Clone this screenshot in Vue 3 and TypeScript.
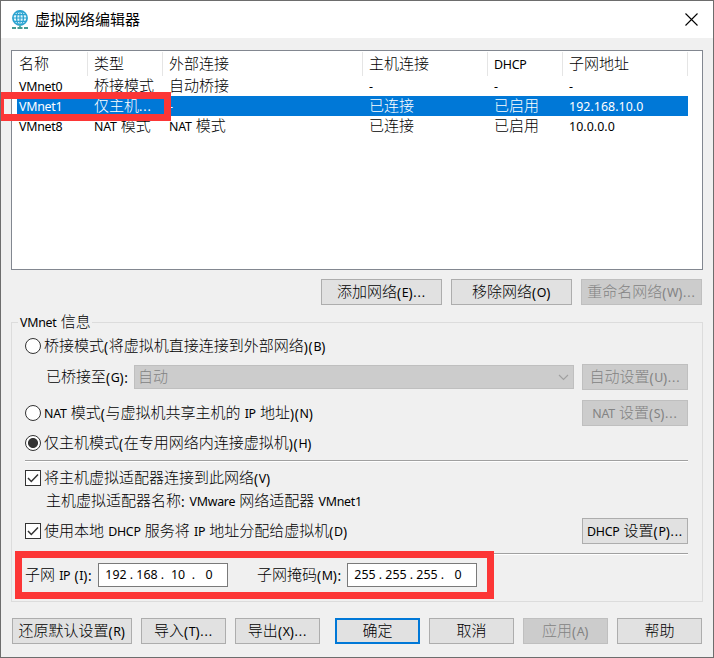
<script setup lang="ts">
import { h, ref, type FunctionalComponent } from 'vue'

interface Network {
  name: string
  type: string
  external: string
  host: string
  dhcp: string
  subnet: string
}

// Ideographs, words, numbers and punctuation have their own metrics,
// so a label is split into runs.
const runPattern = /[\u4e00-\u9fff]+|[():]+|\.{3}| +|[A-Za-z]+\d*|[\d.]+|-/g

function runClass(run: string): string {
  if (/[\u4e00-\u9fff]/.test(run)) return 'han'
  if (/[():]/.test(run)) return 'lat paren'
  if (run === '...') return 'lat dots'
  if (run.startsWith(' ')) return 'lat gap'
  if (/^\d/.test(run)) return 'lat num'
  return 'lat'
}

const Txt: FunctionalComponent<{ t: string }> = (props) =>
  h(
    'span',
    { class: 'txt' },
    (props.t.match(runPattern) ?? []).map((run) => h('span', { class: runClass(run) }, run)),
  )
Txt.props = ['t']

const columns = ['名称', '类型', '外部连接', '主机连接', 'DHCP', '子网地址']
const networks: Network[] = [
  { name: 'VMnet0', type: '桥接模式', external: '自动桥接', host: '-', dhcp: '-', subnet: '-' },
  { name: 'VMnet1', type: '仅主机...', external: '-', host: '已连接', dhcp: '已启用', subnet: '192.168.10.0' },
  { name: 'VMnet8', type: 'NAT 模式', external: 'NAT 模式', host: '已连接', dhcp: '已启用', subnet: '10.0.0.0' },
]
const selected = ref('VMnet1')
const mode = ref('host')
const connectAdapter = ref(true)
const useDhcp = ref(true)
const ip = ['192', '168', '10', '0']
const mask = ['255', '255', '255', '0']
</script>

<template>
  <div class="window">
    <header class="title">
      <svg class="globe" width="18" height="20" viewBox="0 0 18 20">
        <circle cx="9" cy="8" r="7.1" fill="#e2f5fc" stroke="#2ba3d0" stroke-width="1.7" />
        <ellipse cx="9" cy="8" rx="3.4" ry="7" fill="none" stroke="#2ba3d0" stroke-width="1.3" />
        <path d="M9 1v14M2 8h14M3 4.6h12M3 11.4h12" fill="none" stroke="#2ba3d0" stroke-width="1.2" />
        <path d="M9 15v3" stroke="#55b7ae" stroke-width="2" />
        <path d="M1 18h4M6.5 18h5M13 18h4" stroke="#459b91" stroke-width="2" />
      </svg>
      <h1>虚拟网络编辑器</h1>
      <svg class="close" width="13" height="13" viewBox="0 0 13 13">
        <path d="M.5 .5l12 12M12.5 .5l-12 12" stroke="#000" stroke-width="1.1" />
      </svg>
    </header>

    <main class="body">
      <section class="list">
        <div class="row head">
          <div v-for="c in columns" :key="c" class="cell"><Txt :t="c" /></div>
        </div>
        <div
          v-for="n in networks"
          :key="n.name"
          class="row item"
          :class="{ selected: n.name === selected }"
          @click="selected = n.name"
        >
          <div class="cell"><Txt :t="n.name" /></div>
          <div class="cell"><Txt :t="n.type" /></div>
          <div class="cell"><Txt :t="n.external" /></div>
          <div class="cell"><Txt :t="n.host" /></div>
          <div class="cell"><Txt :t="n.dhcp" /></div>
          <div class="cell"><Txt :t="n.subnet" /></div>
        </div>
      </section>

      <div class="actions">
        <button><Txt t="添加网络(E)..." /></button>
        <button><Txt t="移除网络(O)" /></button>
        <button disabled><Txt t="重命名网络(W)..." /></button>
      </div>

      <section class="group">
        <div class="legend"><Txt t="VMnet 信息" /></div>
        <div class="line bridge" @click="mode = 'bridge'">
          <i class="radio" :class="{ on: mode === 'bridge' }"></i>
          <Txt t="桥接模式(将虚拟机直接连接到外部网络)(B)" />
        </div>
        <div class="line bridged-to">
          <Txt class="to-label" t="已桥接至(G):" />
          <div class="combo">
            <Txt t="自动" />
            <svg width="11" height="7" viewBox="0 0 11 7">
              <path d="M1 1l4.5 4.5L10 1" fill="none" stroke="#a0a0a0" stroke-width="1.1" />
            </svg>
          </div>
          <button disabled><Txt t="自动设置(U)..." /></button>
        </div>
        <div class="line nat" @click="mode = 'nat'">
          <i class="radio" :class="{ on: mode === 'nat' }"></i>
          <Txt t="NAT 模式(与虚拟机共享主机的 IP 地址)(N)" />
          <button disabled><Txt t="NAT 设置(S)..." /></button>
        </div>
        <div class="line host" @click="mode = 'host'">
          <i class="radio" :class="{ on: mode === 'host' }"></i>
          <Txt t="仅主机模式(在专用网络内连接虚拟机)(H)" />
        </div>
        <div class="rule"></div>
        <div class="line adapter" @click="connectAdapter = !connectAdapter">
          <i class="check">
            <svg v-if="connectAdapter" width="14" height="14" viewBox="0 0 14 14">
              <path d="M2 7l3.3 3.4L12 3.5" fill="none" stroke="#333" stroke-width="1.5" />
            </svg>
          </i>
          <Txt t="将主机虚拟适配器连接到此网络(V)" />
        </div>
        <div class="line adapter-name">
          <Txt t="主机虚拟适配器名称: VMware 网络适配器 VMnet1" />
        </div>
        <div class="line dhcp">
          <i class="check" @click="useDhcp = !useDhcp">
            <svg v-if="useDhcp" width="14" height="14" viewBox="0 0 14 14">
              <path d="M2 7l3.3 3.4L12 3.5" fill="none" stroke="#333" stroke-width="1.5" />
            </svg>
          </i>
          <Txt t="使用本地 DHCP 服务将 IP 地址分配给虚拟机(D)" />
          <button><Txt t="DHCP 设置(P)..." /></button>
        </div>
        <div class="rule second"></div>
        <div class="line subnet">
          <Txt class="ip-label" t="子网 IP (I):" />
          <div class="address">
            <template v-for="(p, i) in ip" :key="i">
              <b v-if="i">.</b><span>{{ p }}</span>
            </template>
          </div>
          <Txt class="mask-label" t="子网掩码(M):" />
          <div class="address">
            <template v-for="(p, i) in mask" :key="i">
              <b v-if="i">.</b><span>{{ p }}</span>
            </template>
          </div>
        </div>
      </section>

      <footer class="footer">
        <button class="wide"><Txt t="还原默认设置(R)" /></button>
        <button><Txt t="导入(T)..." /></button>
        <button class="export"><Txt t="导出(X)..." /></button>
        <button class="primary"><Txt t="确定" /></button>
        <button><Txt t="取消" /></button>
        <button disabled><Txt t="应用(A)" /></button>
        <button><Txt t="帮助" /></button>
      </footer>
    </main>

    <div class="mark mark-row"></div>
    <div class="mark mark-subnet"></div>
  </div>
</template>

<style>
.txt {
  display: inline-flex;
  align-items: center;
  height: 20px;
  white-space: pre;
}
.txt .han {
  font: 300 15px/20px "Noto Sans CJK SC", sans-serif;
  margin-top: -2px;
}
.txt .lat {
  font: 12.4px/20px "Noto Sans", sans-serif;
  letter-spacing: -0.25px;
  margin-top: 1px;
}
.txt .num {
  letter-spacing: 0.05px;
}
.txt .paren {
  font-size: 13.6px;
  letter-spacing: 0.7px;
}
.txt .dots {
  letter-spacing: 0.9px;
}
.txt .gap {
  letter-spacing: 0.9px;
}
</style>

<style scoped>
* {
  box-sizing: border-box;
}
.window {
  position: relative;
  width: 714px;
  height: 658px;
  border: 1px solid #6d6d6d;
  background: #f0f0f0;
  color: #000;
  overflow: hidden;
}
.title {
  height: 37px;
  display: flex;
  align-items: center;
  padding: 0 15px 0 10px;
  background: #fff;
}
.title h1 {
  margin: -2px auto 0 6px;
  font: 15px/20px "Noto Sans CJK SC", sans-serif;
}
.close {
  margin-top: -1px;
}
.body {
  padding: 12px 10px 0;
}
.list {
  width: 692px;
  height: 220px;
  border: 1px solid #828790;
  background: #fff;
}
.row {
  display: grid;
  grid-template-columns: 76px 75px 200px 125px 75px 125px;
  width: 676px;
  height: 20px;
}
.head {
  height: 25px;
}
.cell {
  display: flex;
  align-items: center;
  padding-left: 6px;
}
.cell:first-child {
  padding-left: 7px;
}
.head .cell {
  height: 24px;
  margin-top: 1px;
  border-right: 1px solid #e5e5e5;
}
.selected {
  color: #fff;
  background: linear-gradient(to right, #fff 5px, #0078d7 5px);
}
button {
  display: flex;
  align-items: center;
  justify-content: center;
  flex: none;
  height: 26px;
  padding: 0;
  border: 1px solid #adadad;
  background: #e1e1e1;
  color: #000;
}
button:disabled {
  border-color: #bfbfbf;
  background: #ccc;
  color: #838383;
}
.actions {
  display: flex;
  justify-content: flex-end;
  gap: 9px;
  padding: 9px 1px 0 0;
}
.actions button {
  width: 121px;
}
.group {
  width: 692px;
  height: 280px;
  margin-top: 17px;
  padding-left: 13px;
  border: 1px solid #dcdcdc;
}
.legend {
  width: 74px;
  height: 20px;
  margin: -11px 0 0 -7px;
  padding-left: 2px;
  background: #f0f0f0;
}
.line {
  display: flex;
  align-items: center;
  width: 663px;
  height: 26px;
}
.line button {
  width: 106px;
  margin-left: auto;
}
.bridge {
  margin-top: 1px;
}
.bridged-to {
  margin-top: 5px;
  padding-left: 21px;
}
.to-label {
  width: 88px;
}
.combo {
  display: flex;
  align-items: center;
  justify-content: space-between;
  width: 440px;
  height: 24px;
  padding: 0 4px 0 3px;
  border: 1px solid #bfbfbf;
  background: #ccc;
  color: #838383;
}
.nat {
  margin-top: 10px;
}
.host {
  margin-top: 4px;
}
.radio {
  flex: none;
  width: 16px;
  height: 16px;
  margin-right: 3px;
  border: 1px solid #333;
  border-radius: 50%;
  background: #fff;
}
.radio.on {
  background: radial-gradient(circle, #333 4.6px, #fff 5.4px);
}
.check {
  flex: none;
  width: 16px;
  height: 16px;
  margin-right: 3px;
  border: 1px solid #333;
  background: #fff;
}
.check svg {
  display: block;
}
.rule {
  width: 663px;
  height: 2px;
  margin-top: 4px;
  border-top: 1px solid #a0a0a0;
  border-bottom: 1px solid #fff;
}
.adapter {
  margin-top: 3px;
}
.adapter-name {
  height: 20px;
  padding-left: 21px;
}
.dhcp {
  margin-top: 7px;
}
.second {
  margin-top: 9px;
}
.subnet {
  margin-top: 7px;
}
.ip-label {
  width: 73px;
}
.mask-label {
  width: 90px;
  margin-left: 29px;
}
.address {
  display: flex;
  align-items: center;
  width: 130px;
  height: 24px;
  padding-left: 4px;
  border: 1px solid #7a7a7a;
  background: #fff;
  font: 12.4px/20px "Noto Sans", sans-serif;
}
.address span {
  width: 26px;
  text-align: center;
}
.address b {
  width: 5px;
  font-weight: 400;
  text-align: center;
}
.footer {
  display: flex;
  gap: 9px;
  padding: 16px 0 0 1px;
}
.footer button {
  width: 85px;
}
.footer .wide {
  width: 120px;
}
.footer .export {
  margin-right: 6px;
}
.footer .primary {
  border: 2px solid #0078d7;
}
.mark {
  position: absolute;
  border: 7px solid #fc3636;
  pointer-events: none;
}
.mark-row {
  left: -1px;
  top: 91px;
  width: 171px;
  height: 29px;
  border-left-width: 4px;
}
.mark-subnet {
  left: 14px;
  top: 550px;
  width: 479px;
  height: 48px;
}
</style>
